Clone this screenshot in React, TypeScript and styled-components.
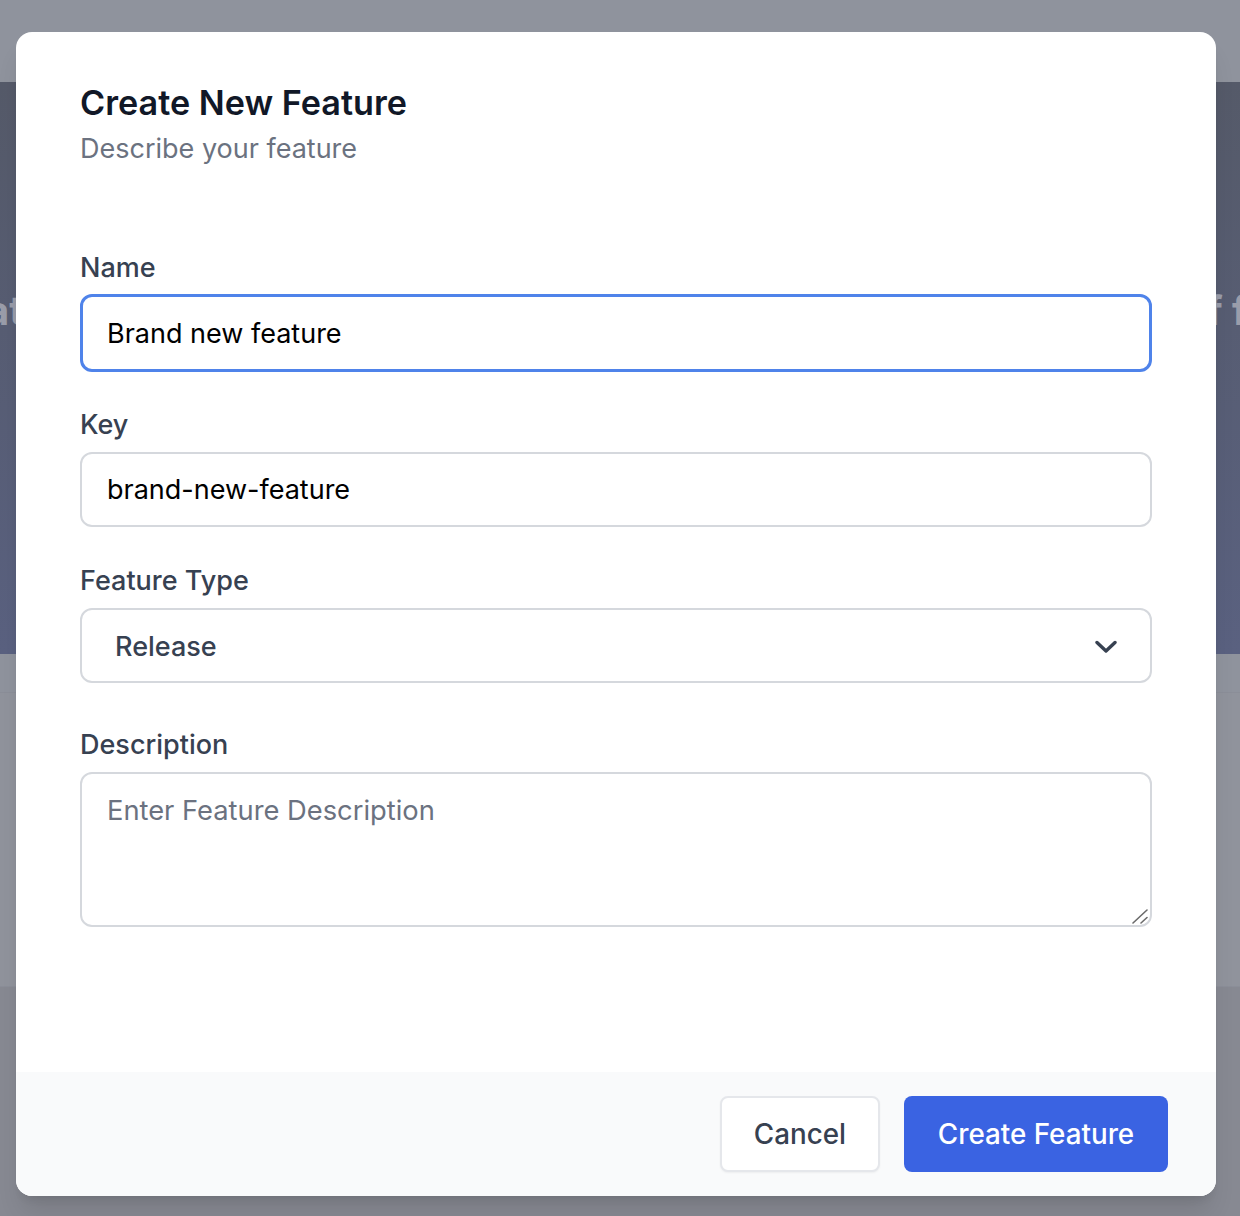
import React from "react";
import styled, { createGlobalStyle } from "styled-components";

const Global = createGlobalStyle`
  html, body { margin: 0; padding: 0; }
  body { font-family: Inter, "Noto Sans", sans-serif; background: #8f939d; }
  * { box-sizing: border-box; }
`;

const Page = styled.div`
  position: relative;
  width: 1240px;
  height: 1216px;
  overflow: hidden;
  background: #8f939d;
  display: flex;
  flex-direction: column;
`;

const TopBar = styled.div`
  height: 82px;
  background: #8f939d;
`;

const Hero = styled.div`
  height: 572px;
  background: linear-gradient(180deg, #555a69 0%, #5a6180 100%);
  display: flex;
  align-items: flex-start;
  justify-content: space-between;
  padding-top: 207px;
  overflow: hidden;
`;

const HeroText = styled.span<{ $shift: number }>`
  font-family: Inter, sans-serif;
  font-weight: 700;
  font-size: 40px;
  line-height: 44px;
  color: #9a9daa;
  margin-left: ${(p) => p.$shift}px;
  margin-right: ${(p) => (p.$shift < 0 ? 0 : -8)}px;
`;

const Band = styled.div<{ $h: number; $bg: string; $line?: boolean }>`
  height: ${(p) => p.$h}px;
  background: ${(p) => p.$bg};
  border-bottom: ${(p) => (p.$line ? "1px solid #8b8e98" : "none")};
`;

const Rest = styled.div`
  flex: 1;
  background: #878992;
`;

const Modal = styled.div`
  position: absolute;
  left: 16px;
  top: 32px;
  width: 1200px;
  height: 1164px;
  background: #ffffff;
  border-radius: 16px;
  box-shadow: 0 20px 25px -5px rgba(0, 0, 0, 0.1), 0 8px 10px -6px rgba(0, 0, 0, 0.1);
  display: flex;
  flex-direction: column;
  overflow: hidden;
`;

const Body = styled.div`
  flex: 1;
  padding: 50px 64px 0 64px;
  display: flex;
  flex-direction: column;
`;

const Title = styled.h2`
  margin: 0;
  font-size: 34.2px;
  line-height: 42px;
  font-weight: 600;
  color: #111827;
  letter-spacing: 0;
`;

const Subtitle = styled.p`
  margin: 7px 0 0 0;
  font-size: 27px;
  line-height: 36px;
  color: #6b7280;
`;

const Form = styled.div`
  margin-top: 83px;
  display: flex;
  flex-direction: column;
  gap: 36px;
`;

const Field = styled.div<{ $extra?: number }>`
  display: flex;
  flex-direction: column;
  gap: 9px;
  margin-top: ${(p) => p.$extra ?? 0}px;
`;

const Label = styled.label`
  font-size: 27px;
  line-height: 36px;
  font-weight: 500;
  color: #374151;
`;

const Input = styled.input<{ $focus?: boolean }>`
  width: 1072px;
  height: ${(p) => (p.$focus ? 78 : 75)}px;
  margin: ${(p) => (p.$focus ? "-1px 0 -1px" : "0")};
  padding: 0 ${(p) => (p.$focus ? 24 : 25)}px;
  border: ${(p) => (p.$focus ? "3px solid #4f83ea" : "2px solid #d5d8dd")};
  border-radius: 12px;
  font-family: Inter, sans-serif;
  font-size: 27px;
  color: #000;
  background: #fff;
  outline: none;
`;

const SelectBox = styled.div`
  width: 1072px;
  height: 75px;
  border: 2px solid #d5d8dd;
  border-radius: 12px;
  display: flex;
  align-items: center;
  justify-content: space-between;
  padding: 2px 33px 0 33px;
  font-size: 27px;
  font-weight: 500;
  color: #374151;
  background: #fff;
`;

const TextAreaWrap = styled.div`
  position: relative;
  width: 1072px;
  height: 155px;
`;

const TextArea = styled.textarea`
  display: block;
  width: 1072px;
  height: 155px;
  padding: 18px 25px;
  border: 2px solid #d5d8dd;
  border-radius: 12px;
  font-family: Inter, sans-serif;
  font-size: 27.3px;
  line-height: 38px;
  color: #000;
  resize: none;
  outline: none;
  &::placeholder { color: #6b7280; }
`;

const Grip = styled.svg`
  position: absolute;
  right: 3px;
  bottom: 3px;
  pointer-events: none;
`;

const Footer = styled.div`
  height: 124px;
  background: #f9fafb;
  display: flex;
  justify-content: flex-end;
  align-items: center;
  gap: 24px;
  padding: 0 48px;
`;

const Button = styled.button<{ $primary?: boolean }>`
  height: 76px;
  width: ${(p) => (p.$primary ? 264 : 160)}px;
  padding: 0;
  border-radius: 8px;
  font-family: Inter, sans-serif;
  font-size: 27.8px;
  font-weight: 500;
  border: ${(p) => (p.$primary ? "none" : "2px solid #e5e7eb")};
  background: ${(p) => (p.$primary ? "#3a63e2" : "#ffffff")};
  color: ${(p) => (p.$primary ? "#ffffff" : "#374151")};
  box-shadow: ${(p) => (p.$primary ? "none" : "0 1px 2px rgba(0,0,0,0.05)")};
`;

const Chevron = () => (
  <svg width="22" height="14" viewBox="0 0 22 14" fill="none">
    <path d="M2 2.5 L11 11 L20 2.5" stroke="#374151" strokeWidth="3.4" strokeLinecap="round" strokeLinejoin="round" />
  </svg>
);

export default function App() {
  return (
    <>
      <Global />
      <Page>
        <TopBar />
        <Hero>
          <HeroText $shift={-14}>at</HeroText>
          <HeroText $shift={0}>f f</HeroText>
        </Hero>
        <Band $h={39} $bg="#8f939d" $line />
        <Band $h={294} $bg="#90939c" $line />
        <Rest />
        <Modal>
          <Body>
            <Title>Create New Feature</Title>
            <Subtitle>Describe your feature</Subtitle>
            <Form>
              <Field>
                <Label>Name</Label>
                <Input $focus defaultValue="Brand new feature" />
              </Field>
              <Field>
                <Label>Key</Label>
                <Input defaultValue="brand-new-feature" />
              </Field>
              <Field>
                <Label>Feature Type</Label>
                <SelectBox>
                  <span>Release</span>
                  <Chevron />
                </SelectBox>
              </Field>
              <Field $extra={8}>
                <Label>Description</Label>
                <TextAreaWrap>
                  <TextArea placeholder="Enter Feature Description" />
                  <Grip width="18" height="16" viewBox="0 0 18 16">
                    <path d="M2 15 L16 2" stroke="#6b6b6b" strokeWidth="1.6" strokeLinecap="round" />
                    <path d="M10 15 L16 9.5" stroke="#6b6b6b" strokeWidth="1.6" strokeLinecap="round" />
                  </Grip>
                </TextAreaWrap>
              </Field>
            </Form>
          </Body>
          <Footer>
            <Button>Cancel</Button>
            <Button $primary>Create Feature</Button>
          </Footer>
        </Modal>
      </Page>
    </>
  );
}
